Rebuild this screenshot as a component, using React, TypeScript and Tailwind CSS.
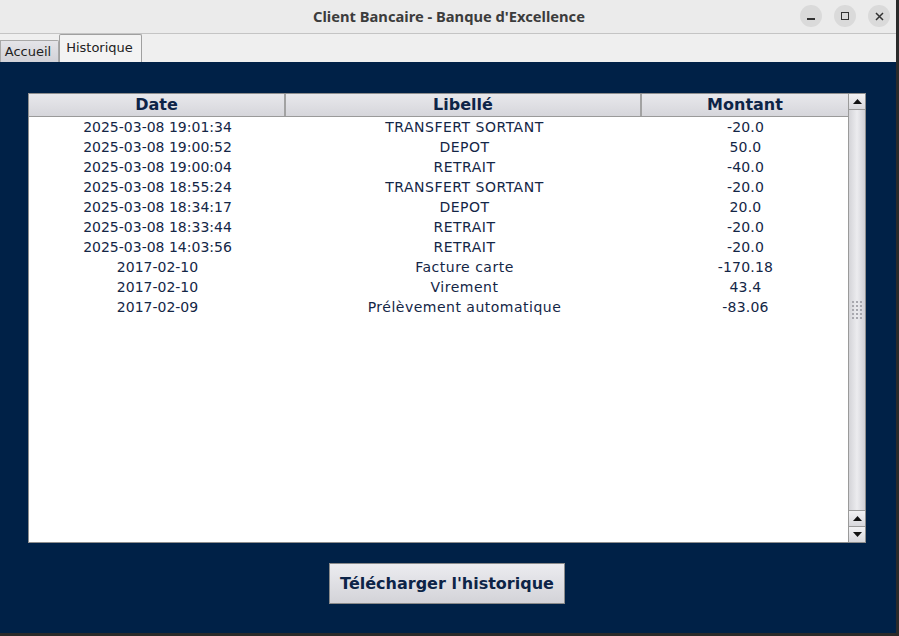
import React from 'react';

const rows: [string, string, string][] = [
  ['2025-03-08 19:01:34', 'TRANSFERT SORTANT', '-20.0'],
  ['2025-03-08 19:00:52', 'DEPOT', '50.0'],
  ['2025-03-08 19:00:04', 'RETRAIT', '-40.0'],
  ['2025-03-08 18:55:24', 'TRANSFERT SORTANT', '-20.0'],
  ['2025-03-08 18:34:17', 'DEPOT', '20.0'],
  ['2025-03-08 18:33:44', 'RETRAIT', '-20.0'],
  ['2025-03-08 14:03:56', 'RETRAIT', '-20.0'],
  ['2017-02-10', 'Facture carte', '-170.18'],
  ['2017-02-10', 'Virement', '43.4'],
  ['2017-02-09', 'Prélèvement automatique', '-83.06'],
];

const ArrowUp = () => (
  <svg width="9" height="5" viewBox="0 0 9 5">
    <path d="M0 5 L4.5 0 L9 5 Z" fill="#111" />
  </svg>
);

const ArrowDown = () => (
  <svg width="9" height="5" viewBox="0 0 9 5">
    <path d="M0 0 L4.5 5 L9 0 Z" fill="#111" />
  </svg>
);

export default function App() {
  return (
    <div className="w-[899px] h-[636px] bg-[#2a2a2a] flex flex-col overflow-hidden font-['DejaVu_Sans',sans-serif]">
      <div className="w-[896px] h-[633px] flex flex-col bg-[#ececec]">
        {/* Title bar */}
        <div className="h-[34px] flex-shrink-0 flex items-center relative border-b border-[#c4c4c4] bg-[#ebebeb]">
          <div className="flex-1 text-center text-[14.7px] font-bold text-[#3c3c3c] font-['Noto_Sans',sans-serif] pl-[2px]">
            Client Bancaire - Banque d'Excellence
          </div>
          <div className="absolute right-[6px] top-[5px] flex gap-[12px]">
            <div className="w-[22px] h-[22px] rounded-full bg-[#dadada] flex items-center justify-center">
              <div className="w-[8px] h-[1.5px] bg-[#333] mt-[6px]" />
            </div>
            <div className="w-[22px] h-[22px] rounded-full bg-[#dadada] flex items-center justify-center">
              <div className="w-[8px] h-[8px] border-[1.5px] border-[#333]" />
            </div>
            <div className="w-[22px] h-[22px] rounded-full bg-[#dadada] flex items-center justify-center">
              <svg width="9" height="9" viewBox="0 0 9 9">
                <path d="M1 1 L8 8 M8 1 L1 8" stroke="#333" strokeWidth="1.5" />
              </svg>
            </div>
          </div>
        </div>

        {/* Tabs */}
        <div className="h-[28px] flex-shrink-0 flex items-end bg-[#efefef] text-[13px] text-[#222]">
          <div className="h-[22px] w-[59px] flex items-center justify-center pr-[3px] bg-gradient-to-b from-[#e4e4e8] to-[#d2d2d8] border border-b-0 border-[#a8a8a8] rounded-tr-[2px]">
            Accueil
          </div>
          <div className="h-[28px] w-[83px] flex items-start pt-[3px] justify-center pr-[2px] bg-[#f3f3f3] border border-b-0 border-[#a0a0a0] rounded-t-[2px]">
            Historique
          </div>
        </div>

        {/* Content */}
        <div className="flex-1 bg-[#002147] flex flex-col pl-[28px] pr-[30px] pt-[31px] pb-[29px]">
          <div className="h-[450px] bg-white border border-[#8e8e8e] flex">
            <div className="flex-1 flex flex-col">
              <div className="h-[23px] flex bg-gradient-to-b from-[#e8e8ec] to-[#d6d6db] border-b border-[#9a9a9a] text-[16px] font-bold text-[#0d2447]">
                <div className="w-[257px] flex items-center justify-center border-r-2 border-[#a2a2a2]">Date</div>
                <div className="w-[356px] flex items-center justify-center border-r-2 border-[#a2a2a2]">Libellé</div>
                <div className="flex-1 flex items-center justify-center">Montant</div>
              </div>
              <div className="flex flex-col text-[14px] text-[#142646]">
                {rows.map((r, i) => (
                  <div key={i} className="h-[20px] flex items-center">
                    <div className="w-[257px] text-center">{r[0]}</div>
                    <div className="w-[357px] text-center tracking-[0.5px]">{r[1]}</div>
                    <div className="flex-1 text-center tracking-[0.2px]">{r[2]}</div>
                  </div>
                ))}
              </div>
            </div>
            {/* Scrollbar */}
            <div className="w-[17px] flex flex-col bg-[#e6e6ea] border-l border-[#9a9a9a]">
              <div className="h-[16px] flex items-center justify-center bg-gradient-to-b from-[#f2f2f4] to-[#d8d8dc] border-b border-[#9a9a9a]">
                <ArrowUp />
              </div>
              <div className="flex-1 flex items-center justify-center bg-gradient-to-r from-[#d4d4d8] via-[#ececef] to-[#d0d0d5] border-b border-[#9a9a9a]">
                <div className="grid grid-cols-3 gap-[2px]">
                  {Array.from({ length: 15 }).map((_, i) => (
                    <div key={i} className="w-[2px] h-[2px] bg-[#a8a8ae]" />
                  ))}
                </div>
              </div>
              <div className="h-[16px] flex items-center justify-center bg-gradient-to-b from-[#f2f2f4] to-[#d8d8dc] border-b border-[#9a9a9a]">
                <ArrowUp />
              </div>
              <div className="h-[15px] flex items-center justify-center bg-gradient-to-b from-[#f2f2f4] to-[#d8d8dc]">
                <ArrowDown />
              </div>
            </div>
          </div>
          <div className="flex justify-center mt-[20px]">
            <button className="w-[236px] h-[41px] bg-gradient-to-b from-[#ececf0] to-[#d3d3d8] border border-[#8a8a8a] text-[16px] font-bold text-[#0d2447]">
              Télécharger l'historique
            </button>
          </div>
        </div>
      </div>
    </div>
  );
}
